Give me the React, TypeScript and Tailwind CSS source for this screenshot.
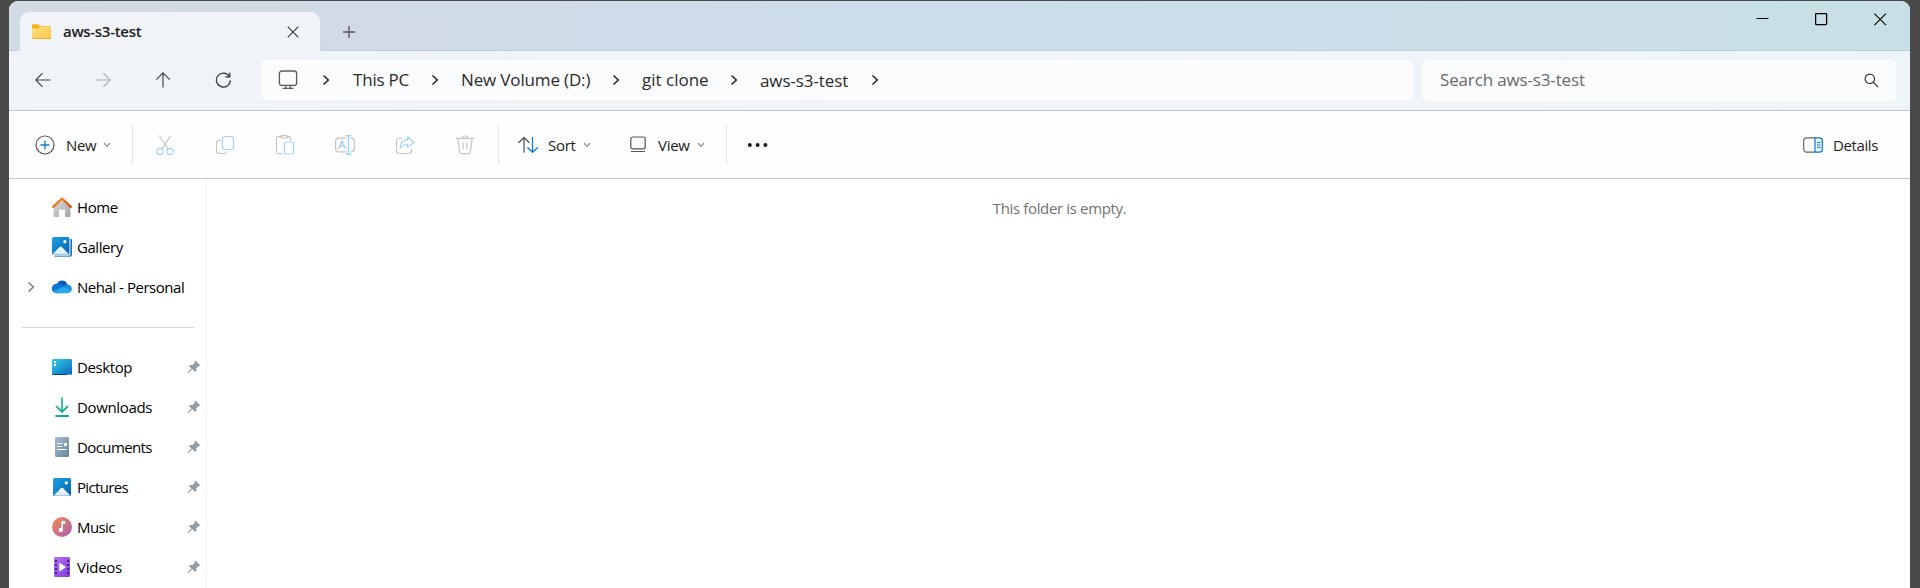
import React from 'react';

const Chevron = () => (
  <svg width="8" height="12" viewBox="0 0 8 12" fill="none" stroke="#222" strokeWidth="1.5">
    <path d="M1.5 1.5 6.3 6 1.5 10.5" />
  </svg>
);

const Down = () => (
  <svg width="8" height="6" viewBox="0 0 8 6" fill="none" stroke="#777" strokeWidth="1.1" className="shrink-0">
    <path d="M1 1.2 4 4.3 7 1.2" />
  </svg>
);

const Svg = ({ children, size = 20, className = '' }: { children: React.ReactNode; size?: number; className?: string }) => (
  <svg width={size} height={size} viewBox="0 0 20 20" fill="none" strokeLinecap="round" strokeLinejoin="round" className={`shrink-0 ${className}`}>
    {children}
  </svg>
);

const G = '#c4c4c4';
const B = '#a6d0f2';

const disabledIcons = [
  <g key="cut" strokeWidth="1.2">
    <path d="M4.5 1 13 14M15.5 1 7 14" stroke={G} />
    <circle cx="5" cy="16.5" r="3.1" stroke={B} />
    <circle cx="15" cy="16.5" r="3.1" stroke={B} />
  </g>,
  <g key="copy" strokeWidth="1.2">
    <path d="M5.500 5.500H4A2.500 2.500 0 0 0 1.500 8v7.500A3 3 0 0 0 4.500 18.500h4.500a2.500 2.500 0 0 0 2.500-2" stroke={G} />
    <rect x="7.500" y="1.500" width="11" height="13" rx="2.500" stroke={B} />
  </g>,
  <g key="paste" strokeWidth="1.2">
    <path d="M6 1.700H3A1.500 1.500 0 0 0 1.500 3.200V17A1.500 1.500 0 0 0 3 18.500H7M12 1.700h2a1.500 1.500 0 0 1 1.500 1.500V5" stroke={G} />
    <rect x="5.500" y="0.700" width="7" height="2.300" rx="1.100" stroke={G} />
    <rect x="9.500" y="7" width="9" height="12" rx="1.500" stroke={B} />
  </g>,
  <g key="rename" strokeWidth="1.2">
    <path d="M11 3.200H3.500A3 3 0 0 0 .6 6.200v7.600a3 3 0 0 0 2.900 3H11M16 3.200h.5a3 3 0 0 1 2.900 3v7.600a3 3 0 0 1-2.900 3H16" stroke={G} />
    <path d="M3.800 13.300 7 5.700l3.200 7.600M4.900 11h4.200M11 .8h5M11 19.200h5M13.500.8v18.400" stroke={B} strokeWidth="1.400" />
  </g>,
  <g key="share" strokeWidth="1.2">
    <path d="M7.500 3H4.500A3 3 0 0 0 1.500 6v9.500a3 3 0 0 0 3 3h9a3 3 0 0 0 3-3V14" stroke={G} />
    <path d="M12.500 1.800 19 7.200l-6.500 5.200V9.500C9 9.300 7 10.500 5 13c.3-5 3-8 7.500-8.300Z" stroke={B} />
  </g>,
  <g key="delete" strokeWidth="1.2" stroke={G}>
    <path d="M1.200 3.400h17.600M2.800 3.600l1.900 13.200A2 2 0 0 0 6.700 18.600h6.600a2 2 0 0 0 2-1.800L17.200 3.600M7.600 3a2.400 2 0 0 1 4.800 0M8.200 7.800v6M11.800 7.800v6" />
  </g>,
];

const HomeIcon = () => (
  <Svg>
    <defs>
      <linearGradient id="hw" x1="0" y1="0" x2="1" y2="1"><stop stopColor="#dedede" /><stop offset="1" stopColor="#a3a3a3" /></linearGradient>
      <linearGradient id="hr" x1="0" y1="0" x2="1" y2="1"><stop stopColor="#f79a1c" /><stop offset="1" stopColor="#d14611" /></linearGradient>
    </defs>
    <path d="M1.500 9.500 10 2l8.500 7.500V19a1 1 0 0 1-1 1H13v-7.500H7V20H2.500a1 1 0 0 1-1-1Z" fill="url(#hw)" />
    <path d="M1.200 9.800 10 1.500l8.800 8.300" stroke="url(#hr)" strokeWidth="2.300" />
  </Svg>
);

const PictureArt = ({ id }: { id: string }) => (
  <>
    <defs>
      <linearGradient id={id} x1="0" y1="0" x2="1" y2="1"><stop stopColor="#1ba1e2" /><stop offset="1" stopColor="#0663b5" /></linearGradient>
      <linearGradient id={`${id}m`} x1="0" y1="0" x2="0" y2="1"><stop stopColor="#fff" /><stop offset="1" stopColor="#d3e9fa" /></linearGradient>
    </defs>
    <rect width="18" height="18" rx="1.600" fill={`url(#${id})`} />
    <path d="M1.200 17 8 10.200q1-.9 2 0L16.800 17q-.3.700-1 .700H2.200q-.7 0-1-.7Z" fill={`url(#${id}m)`} />
    <circle cx="13.300" cy="4.800" r="1.600" fill="#fff" />
  </>
);

const GalleryIcon = () => (
  <Svg>
    <path d="M19.200 2.500v15a1.700 1.700 0 0 1-1.700 1.700" stroke="#1c6fbd" strokeWidth="1.600" />
    <path d="M3 19.300h14.500" stroke="#6ea3d8" strokeWidth="1.400" />
    <rect width="18" height="18" fill="#fff" />
    <g transform="scale(.97)"><PictureArt id="gal" /></g>
  </Svg>
);

const CloudIcon = () => (
  <Svg>
    <path d="M5 7a5.500 5.500 0 0 1 10.200 0L16 10H4Z" fill="#0a5fb4" />
    <path d="M4.500 6.800c2-.5 3.700 0 5.500 1.200l5 4L7 16.300H4.600A4.700 4.700 0 0 1 4.500 6.800Z" fill="#0f78d4" />
    <path d="M15.200 7.400a4.500 4.500 0 0 1 3.800 7l-7.500-4.500c1-1.500 2-2.300 3.700-2.500Z" fill="#1490df" />
    <path d="M1.200 14.500 11.500 9.800l7.700 4.400a4.400 4.400 0 0 1-3.700 2.100H4.600a4.600 4.600 0 0 1-3.400-1.800Z" fill="#28a8ea" />
  </Svg>
);

const DesktopIcon = () => (
  <Svg>
    <defs><linearGradient id="dk" x1="0" y1="0" x2="1" y2="1"><stop stopColor="#33cfe4" /><stop offset="1" stopColor="#0b66bd" /></linearGradient></defs>
    <rect y="2" width="20" height="16" rx="1.400" fill="url(#dk)" />
    <path d="M.2 17h19.600q-.3 1-1.300 1h-17q-1 0-1.300-1Z" fill="#0b3f6f" />
    <path d="M2 4h2v2H2zM2 7h2v2H2zM15.500 17h1v1h-1zM17.500 17h1v1h-1z" fill="#fff" />
  </Svg>
);

const DownloadIcon = () => (
  <Svg>
    <defs><linearGradient id="dl" gradientUnits="userSpaceOnUse" x1="4" y1="0" x2="16" y2="20"><stop stopColor="#3ccb92" /><stop offset="1" stopColor="#08a095" /></linearGradient></defs>
    <path d="M10 1v13.500M4.500 9.500 10 15l5.500-5.500M4 19h12.200" stroke="url(#dl)" strokeWidth="1.800" />
  </Svg>
);

const DocumentIcon = () => (
  <Svg>
    <defs><linearGradient id="dc" x1="0" y1="0" x2="1" y2="1"><stop stopColor="#a9bdd2" /><stop offset="1" stopColor="#66849f" /></linearGradient></defs>
    <rect x="3" width="14" height="20" rx="1.300" fill="url(#dc)" />
    <path d="M5.200 6.500h5M5.200 9.500h5M5.200 12.500h9.600" stroke="#fff" strokeWidth="1" strokeLinecap="butt" />
    <path d="M12 6h3v3h-3z" fill="#fff" />
  </Svg>
);

const MusicIcon = () => (
  <Svg>
    <defs><linearGradient id="mu" x1="0" y1="0" x2="1" y2="1"><stop offset=".1" stopColor="#ee8a57" /><stop offset="1" stopColor="#a55bb5" /></linearGradient></defs>
    <circle cx="10" cy="10" r="10" fill="url(#mu)" />
    <path d="M9.400 4h3.800v2.800h-2.300V13a2.100 2.100 0 1 1-1.500-2Z" fill="#fff" />
  </Svg>
);

const VideoIcon = () => (
  <Svg>
    <defs><linearGradient id="vi" x1="0" y1="0" x2="1" y2="1"><stop stopColor="#b473ef" /><stop offset="1" stopColor="#7f3ce0" /></linearGradient></defs>
    <rect x="2" width="16" height="20" rx="1.300" fill="url(#vi)" />
    <path d="M3 3h2v2H3zM3 7h2v2H3zM3 11h2v2H3zM3 15h2v2H3zM15 3h2v2h-2zM15 7h2v2h-2zM15 11h2v2h-2zM15 15h2v2h-2z" fill="#46227d" />
    <path d="M7.300 6.300v7.600q0 .6.600.3l5.600-3.700q.5-.4 0-.8L7.900 6q-.6-.3-.6.300Z" fill="#fff" />
  </Svg>
);

const Pin = () => (
  <svg width="14" height="14" viewBox="0 0 14 14" className="shrink-0" fill="#939da5">
    <path d="M8.300.6 13.200 5.300l-.7.700-1.200.2-2.100 2.300.2 2.300-1.200 1.300-2.800-2.800L1.300 13.300.5 13.200.6 12.500 4.500 8.500 1.800 5.900 3 4.900l2.400.2 2.200-2.300.1-1.500Z" />
  </svg>
);

const items = [
  { label: 'Home', icon: <HomeIcon />, cls: 'tracking-[-0.4px]' },
  { label: 'Gallery', icon: <GalleryIcon />, cls: 'tracking-[-0.45px]' },
  { label: 'Nehal - Personal', icon: <CloudIcon />, expand: true, cls: 'tracking-[-0.47px]' },
  null,
  { label: 'Desktop', icon: <DesktopIcon />, pin: true, cls: 'tracking-[-0.4px]' },
  { label: 'Downloads', icon: <DownloadIcon />, pin: true, cls: 'tracking-[-0.35px]' },
  { label: 'Documents', icon: <DocumentIcon />, pin: true, cls: 'tracking-[-0.6px]' },
  { label: 'Pictures', icon: <Svg><g transform="translate(1 1)"><PictureArt id="pic" /></g></Svg>, pin: true, cls: 'tracking-[-0.65px]' },
  { label: 'Music', icon: <MusicIcon />, pin: true, cls: 'tracking-[-0.6px]' },
  { label: 'Videos', icon: <VideoIcon />, pin: true, cls: 'tracking-[-0.25px]' },
];

const crumbs = [
  { t: 'This PC', c: 'w-[87px] pl-4 tracking-[-0.2px]' },
  { t: 'New Volume (D:)', c: 'w-[159px] pl-[15px] tracking-[-0.15px]' },
  { t: 'git clone', c: 'w-[96px] pl-[15px]' },
  { t: 'aws-s3-test', c: 'w-[119px] pl-[15px] pt-px tracking-[-0.1px]' },
];

function TabStrip() {
  return (
    <div className="flex h-[50px] items-start bg-linear-to-r from-[#d2dae4] via-[#ccdcea] to-[#c8dfe5]">
      <div className="h-[50px] w-[11px] shrink-0 rounded-br-[5px] border-b border-[#bccbdb]" />
      <div className="mt-[11px] flex h-[39px] w-[300px] shrink-0 items-center rounded-t-[9px] bg-[#f0f4f8] pl-3">
        <svg width="19" height="15" viewBox="0 0 19 15" className="shrink-0">
          <defs><linearGradient id="fo" x1="0" y1="0" x2="1" y2="1"><stop stopColor="#ffe08a" /><stop offset="1" stopColor="#fdc63c" /></linearGradient></defs>
          <path d="M0 1.300Q0 .3 1 .3h5L8 2.300h10q1 0 1 1V8H0Z" fill="#f6b21b" />
          <path d="M0 4.500h6.500L8 2.900h10.500q.5 0 .5.500V14q0 .8-.8.800H.8Q0 14.800 0 14Z" fill="url(#fo)" />
          <path d="M.3 14.500h18.400" stroke="#e9a51d" strokeWidth=".8" />
        </svg>
        <span className="ml-3 w-[224px] text-[15px] font-semibold tracking-[-0.3px] text-[#202020]">aws-s3-test</span>
        <svg width="12" height="12" viewBox="0 0 12 12" className="shrink-0" stroke="#333" strokeWidth="1.100"><path d="m.7.7 10.600 10.600M11.300.7.7 11.300" /></svg>
      </div>
      <div className="flex h-[50px] grow items-start justify-between rounded-bl-[5px] border-b border-[#bccbdb]">
        <svg width="14" height="14" viewBox="0 0 14 14" className="mt-6 ml-[22px]" stroke="#555" strokeWidth="1.300"><path d="M7 1v12M1 7h12" /></svg>
        <div className="mt-3 mr-[23px] flex gap-[46px]">
          <svg width="13" height="13" viewBox="0 0 13 13" stroke="#000"><path d="M.5 5.500h12" /></svg>
          <svg width="13" height="13" viewBox="0 0 13 13" fill="none" stroke="#000" strokeWidth="1.300"><rect x=".6" y=".6" width="11" height="11" rx=".8" /></svg>
          <svg width="13" height="13" viewBox="0 0 13 13" stroke="#000" strokeWidth="1.100"><path d="m.4.600 11.600 11.600M12 .6.4 12.200" /></svg>
        </div>
      </div>
    </div>
  );
}

function NavBar() {
  const box = 'flex w-[60px] h-10 items-center justify-center';
  return (
    <div className="flex h-[60px] border-b border-[#bac8d8] bg-linear-to-r from-[#f0f4f8] to-[#eef5f8] pt-[9px] pl-1">
      <div className={box}><svg width="16" height="16" viewBox="0 0 16 16" fill="none" stroke="#444" strokeWidth="1.200"><path d="M15.500 8H1M7.500 1.200.9 8l6.600 6.800" /></svg></div>
      <div className={box}><svg width="16" height="16" viewBox="0 0 16 16" fill="none" stroke="#aaaeb2" strokeWidth="1.200"><path d="M.5 8H15M8.500 1.200 15.100 8l-6.600 6.800" /></svg></div>
      <div className={box}><svg width="16" height="16" viewBox="0 0 16 16" fill="none" stroke="#444" strokeWidth="1.200"><path d="M8 15.500V1M1.300 7.700 8 .9l6.700 6.800" /></svg></div>
      <div className={box}><svg width="16" height="16" viewBox="0 0 16 16" fill="none" stroke="#333" strokeWidth="1.200"><path d="M14.300 4.300A7 7 0 1 0 15.400 8.300M14.800.4v4.400H10.400" /></svg></div>
      <div className="ml-2 flex h-10 w-[1152px] items-center rounded-[5px] bg-[#fafcfe] text-[17px] text-[#2a2a2a]">
        <div className="flex w-[54px] justify-center">
          <svg width="20" height="20" viewBox="0 0 20 20" fill="none" stroke="#5a5a5a" strokeWidth="1.300"><rect x="1.400" y="1" width="17.200" height="14.400" rx="2.500" /><path d="M7.800 15.400v3M12.200 15.400v3M4.500 18.300h11" /></svg>
        </div>
        <div className="flex w-[22px] justify-center"><Chevron /></div>
        {crumbs.map((c) => (
          <React.Fragment key={c.t}>
            <span className={`shrink-0 whitespace-nowrap ${c.c}`}>{c.t}</span>
            <div className="flex w-[22px] justify-center"><Chevron /></div>
          </React.Fragment>
        ))}
      </div>
      <div className="ml-[9px] flex h-[41px] w-[474px] items-center justify-between rounded-[5px] bg-[#fafcfe] pr-[17px] pl-[18px]">
        <span className="pb-px text-[17px] tracking-[-0.15px] text-[#686868]">Search aws-s3-test</span>
        <svg width="15" height="15" viewBox="0 0 15 15" fill="none" stroke="#333" strokeWidth="1.200"><circle cx="5.800" cy="5.800" r="4.700" /><path d="m9.200 9.200 5 5" /></svg>
      </div>
    </div>
  );
}

function CommandBar() {
  return (
    <div className="flex h-[68px] items-center border-b border-[#bac8d4] bg-[#fefefe] text-[15px] text-[#222]">
      <div className="flex w-[123px] items-center pl-[26px]">
        <Svg><circle cx="10" cy="10" r="9" stroke="#555" strokeWidth="1.200" /><path d="M10 6v8M6 10h8" stroke="#0f78d0" strokeWidth="1.300" /></Svg>
        <span className="ml-[11px] w-[37px] pt-[2px] tracking-[-0.3px]">New</span>
        <Down />
      </div>
      <div className="h-10 w-px bg-[#e6e6e6]" />
      <div className="ml-[2px] flex">
        {disabledIcons.map((icon, i) => <div key={i} className="flex w-[60px] justify-center"><Svg>{icon}</Svg></div>)}
      </div>
      <div className="ml-[3px] h-10 w-px bg-[#e6e6e6]" />
      <div className="flex w-[227px] items-center pl-[18px]">
        <Svg className="w-[22px]"><path d="M6 17V3M.8 7.500 6 2.500l5 5" stroke="#555" strokeWidth="1.300" /><path d="M14.500 2.500V17M9.800 12.700l4.700 4.600 5-4.600" stroke="#0f78d0" strokeWidth="1.300" /></Svg>
        <span className="ml-[9px] w-[35px] pt-[2px] tracking-[-0.3px]">Sort</span>
        <Down />
        <svg width="16" height="17" viewBox="0 0 16 17" fill="none" stroke="#555" strokeWidth="1.200" className="ml-[39px] shrink-0"><rect x=".8" y="1" width="14.400" height="11.800" rx="2" fill="#fafafa" /><path d="M1 15.500h14" /></svg>
        <span className="ml-3 w-[39px] pt-[2px] tracking-[-0.3px]">View</span>
        <Down />
      </div>
      <div className="h-10 w-px bg-[#e6e6e6]" />
      <svg width="22" height="6" viewBox="0 0 22 6" fill="#1a1a1a" className="ml-5"><circle cx="2.800" cy="3" r="2" /><circle cx="10.600" cy="3" r="2" /><circle cx="18.400" cy="3" r="2" /></svg>
      <div className="ml-auto flex items-center pr-[31px]">
        <svg width="20" height="16" viewBox="0 0 20 16" fill="none" strokeWidth="1.200"><path d="M12 .8H3.600A2.900 2.900 0 0 0 .7 3.700v8.600a2.900 2.900 0 0 0 2.900 2.900H12" stroke="#666" fill="#fafafa" /><path d="M12 .8h4.400a2.900 2.900 0 0 1 2.900 2.900v8.600a2.900 2.900 0 0 1-2.900 2.900H12ZM14.200 5.500h3.200M14.200 8h3.200M14.200 10.500h3.200" stroke="#0f78d0" fill="#e5f4ff" /></svg>
        <span className="ml-[10px] w-[46px] pt-[2px] tracking-[-0.4px]">Details</span>
      </div>
    </div>
  );
}

export default function App() {
  return (
    <div className="h-[588px] overflow-hidden bg-[#4a4a4a] pt-px pr-[10px] pl-[9px] font-['Open_Sans','Noto_Sans',sans-serif]">
      <div className="flex h-[587px] flex-col overflow-hidden rounded-t-[9px] bg-white">
        <TabStrip />
        <NavBar />
        <CommandBar />
        <div className="flex grow">
          <aside className="w-[198px] shrink-0 border-r border-[#f1f1f1] pt-2 text-[15px] text-black">
            {items.map((it, i) =>
              it ? (
                <div key={it.label} className="flex h-10 items-center pr-[5px]">
                  <div className="flex w-[43px] shrink-0 pl-[18px] opacity-60">{it.expand && <Chevron />}</div>
                  {it.icon}
                  <span className={`ml-[5px] grow whitespace-nowrap ${it.cls}`}>{it.label}</span>
                  {it.pin && <Pin />}
                </div>
              ) : (
                <div key={i} className="flex h-10 items-start pt-5 pr-3 pl-[13px]"><div className="h-px grow bg-[#d6d6d6]" /></div>
              ),
            )}
          </aside>
          <main className="flex grow justify-center pt-[18px] pl-[2px] text-[15px] text-[#707070]">
            <p className="tracking-[-0.35px]">This folder is empty.</p>
          </main>
        </div>
      </div>
    </div>
  );
}
